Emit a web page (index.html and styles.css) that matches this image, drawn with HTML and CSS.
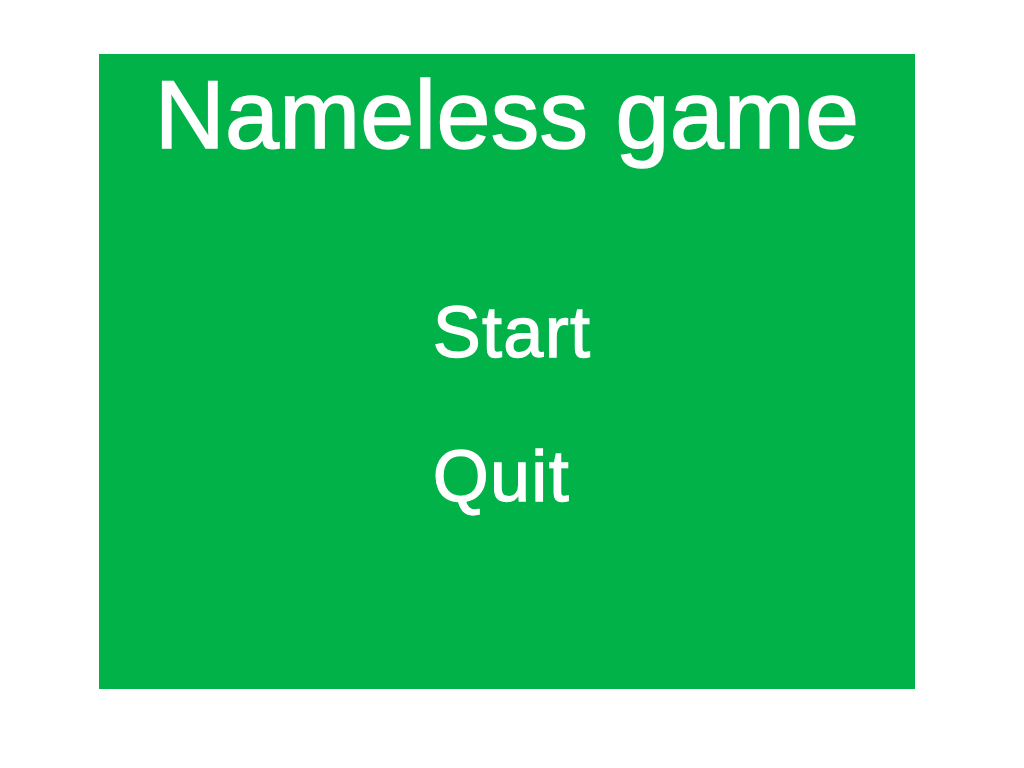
FILE: index.html
```html
<!DOCTYPE html>
<html>
<head>
<meta charset="utf-8">
<link rel="stylesheet" href="styles.css">
</head>
<body>
<div class="screen">
  <h1 class="title">Nameless game</h1>
  <ul class="menu">
    <li class="item">Start</li>
    <li class="item">Quit</li>
  </ul>
</div>
</body>
</html>
```
FILE: styles.css
```css
html, body {
  margin: 0;
  padding: 0;
  background: #ffffff;
}
.screen {
  margin: 54px 0 0 99px;
  width: 816px;
  height: 635px;
  background: #00b247;
  color: #ffffff;
  font-family: "Liberation Sans", Arial, sans-serif;
  display: flex;
  flex-direction: column;
  align-items: center;
  box-sizing: border-box;
  padding-top: 13px;
}
.title {
  margin: 0;
  font-size: 97px;
  line-height: 96px;
  font-weight: normal;
  letter-spacing: 0.3px;
  -webkit-text-stroke: 1.6px #ffffff;
}
.menu {
  list-style: none;
  margin: 133px 0 0 0;
  padding: 0;
  display: flex;
  flex-direction: column;
  gap: 72px;
  padding-left: 10px;
}
.item {
  font-size: 72px;
  line-height: 72px;
  letter-spacing: 1.3px;
  -webkit-text-stroke: 1.3px #ffffff;
}
```
